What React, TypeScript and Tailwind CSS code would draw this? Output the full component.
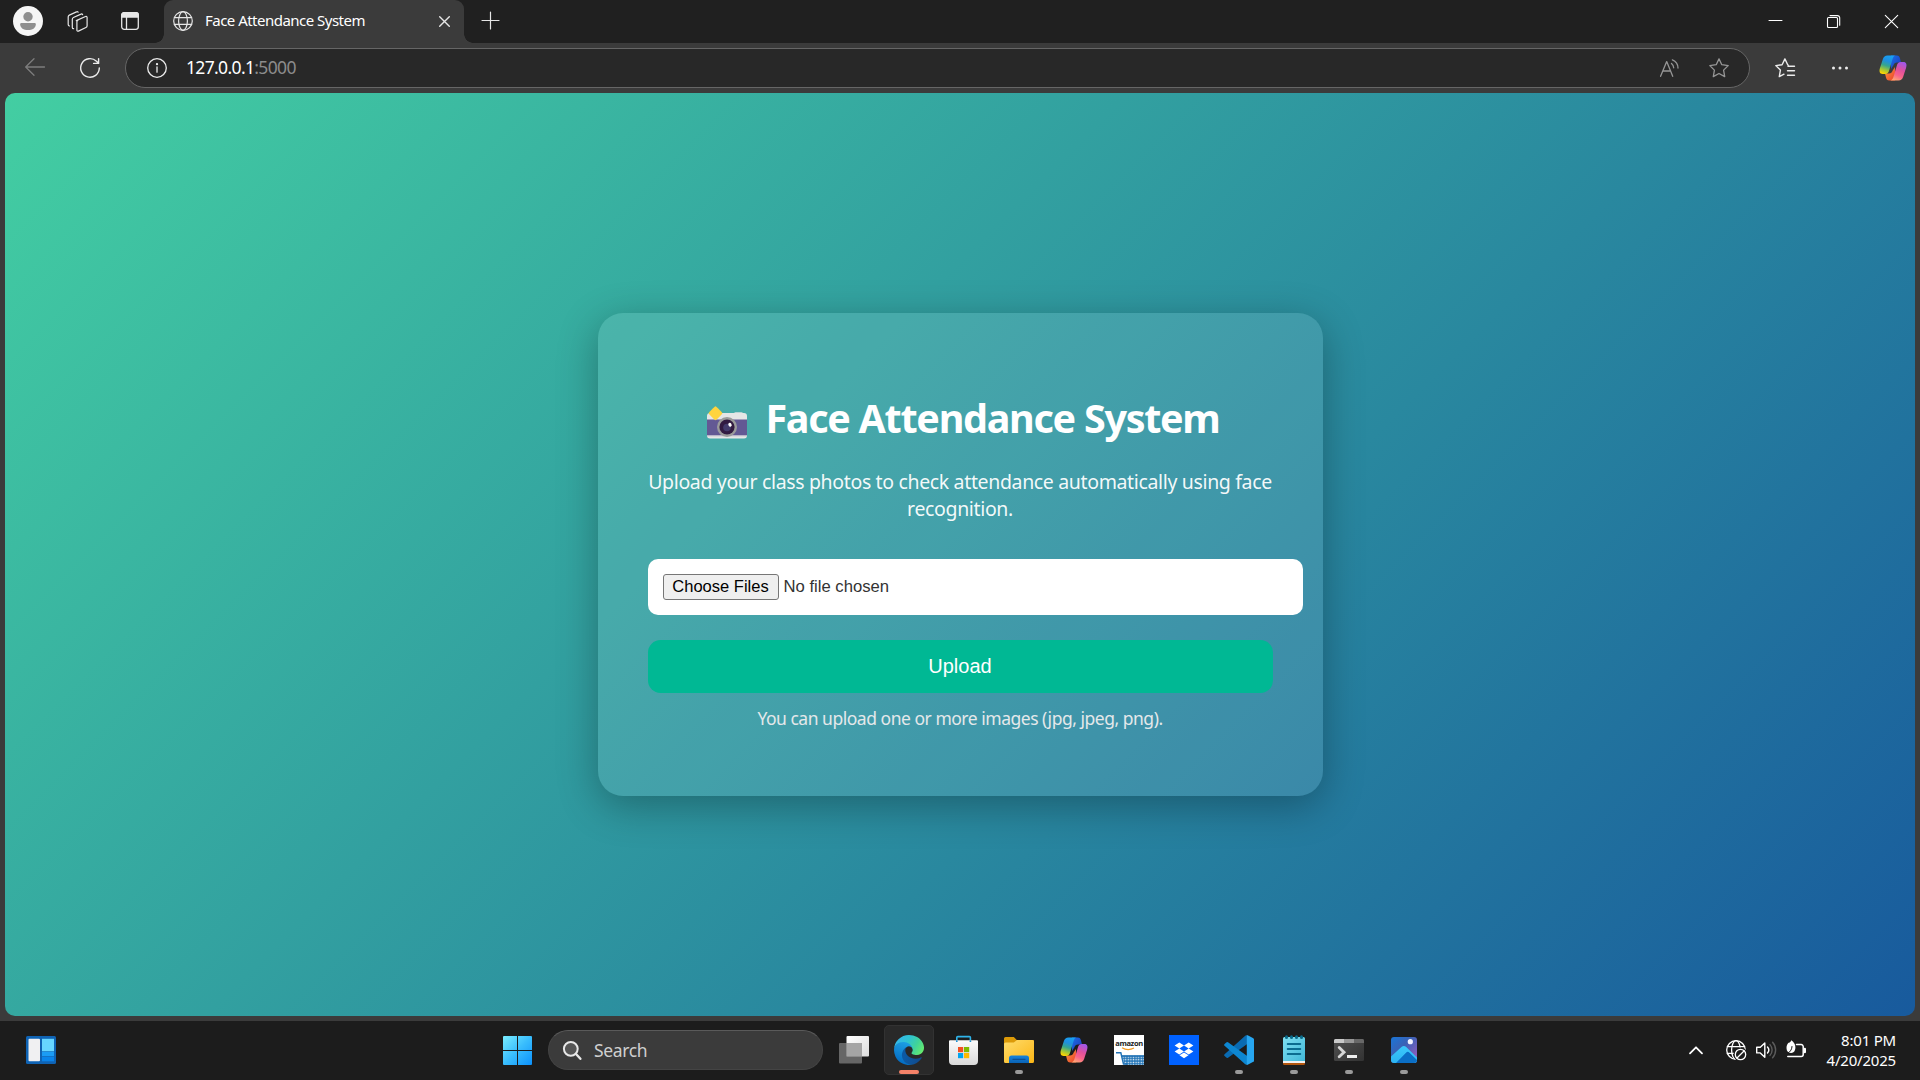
import React from "react";

type IconProps = { w?: number; h?: number; className?: string; sw?: number; children: React.ReactNode };

function Icon({ w = 20, h = 20, className = "", sw = 1.3, children }: IconProps) {
  return (
    <svg
      width={w}
      height={h}
      viewBox={`0 0 ${w} ${h}`}
      fill="none"
      stroke="currentColor"
      strokeWidth={sw}
      strokeLinecap="round"
      strokeLinejoin="round"
      className={`block shrink-0 overflow-visible ${className}`}
    >
      {children}
    </svg>
  );
}

function Globe() {
  return (
    <>
      <circle cx="10" cy="10" r="9.3" />
      <ellipse cx="10" cy="10" rx="4.4" ry="9.3" />
      <path d="M1.4 6.6h17.2M1.4 13.4h17.2" />
    </>
  );
}

function CopilotLogo({ id }: { id: string }) {
  return (
    <svg width="28" height="26" viewBox="0 0 28 26" className="block shrink-0">
      <defs>
        <linearGradient id={`${id}a`} x1="0.6" y1="0" x2="0.3" y2="1">
          <stop offset="0" stopColor="#18a0f2" />
          <stop offset="0.3" stopColor="#1f8fe0" />
          <stop offset="0.55" stopColor="#35a58f" />
          <stop offset="0.78" stopColor="#9cc53b" />
          <stop offset="1" stopColor="#ffd400" />
        </linearGradient>
        <linearGradient id={`${id}b`} x1="0.7" y1="0" x2="0.3" y2="1">
          <stop offset="0" stopColor="#a257e8" />
          <stop offset="0.4" stopColor="#e0509c" />
          <stop offset="0.7" stopColor="#f8628a" />
          <stop offset="1" stopColor="#ffa673" />
        </linearGradient>
        <linearGradient id={`${id}c`} x1="0" y1="0" x2="1" y2="1">
          <stop offset="0" stopColor="#1a6fe6" />
          <stop offset="1" stopColor="#1e35b8" />
        </linearGradient>
        <linearGradient id={`${id}d`} x1="0" y1="0" x2="1" y2="1">
          <stop offset="0" stopColor="#ff9a3c" />
          <stop offset="1" stopColor="#e8412c" />
        </linearGradient>
      </defs>
      <path d="M12 .5h5.8c2 0 2.7 1.300 3.200 3L22 7.600h-4c-2 0-3 1-3.700 3L12 14z" fill={`url(#${id}c)`} />
      <path d="M16 25.500h-5.800c-2 0-2.700-1.300-3.200-3L6 18.400h4c2 0 3-1 3.700-3L16 12z" fill={`url(#${id}d)`} />
      <path d="M8.500.5h8.300c-2 0-2.800 2-3.600 4.700l-3 10c-.8 2.600-1.700 3.800-4 3.800H3.600C.6 19 0 16.300.9 13.300L3.900 4C4.700 1.700 6 .5 8.500.5z" fill={`url(#${id}a)`} />
      <path d="M19.500 25.500h-8.300c2 0 2.800-2 3.600-4.700l3-10c.8-2.600 1.700-3.800 4-3.800h2.600c3 0 3.600 2.700 2.700 5.700l-3 9.300c-.8 2.300-2.100 3.500-4.600 3.500z" fill={`url(#${id}b)`} />
    </svg>
  );
}

function EdgeLogo() {
  return (
    <svg width="30" height="30" viewBox="0 0 256 256" className="block">
      <defs>
        <linearGradient id="e1" x1="0.2" y1="0.5" x2="1" y2="0.6">
          <stop offset="0" stopColor="#0c59a4" />
          <stop offset="1" stopColor="#114a8b" />
        </linearGradient>
        <linearGradient id="e2" x1="0.6" y1="0.1" x2="0.3" y2="1">
          <stop offset="0" stopColor="#1b9de2" />
          <stop offset="0.4" stopColor="#1388d4" />
          <stop offset="1" stopColor="#0067c0" />
        </linearGradient>
        <linearGradient id="e3" x1="0" y1="0.3" x2="1" y2="0.7">
          <stop offset="0" stopColor="#35b6ee" />
          <stop offset="0.4" stopColor="#2fc3d0" />
          <stop offset="0.7" stopColor="#40d39a" />
          <stop offset="1" stopColor="#66eb6e" />
        </linearGradient>
      </defs>
      <path fill="url(#e1)" d="M231 190.500c-3.400 1.800-6.900 3.400-10.500 4.700a101.800 101.800 0 0 1-35.900 6.500c-47.300 0-88.500-32.500-88.500-74.300a31.500 31.500 0 0 1 16.400-27.300c-42.800 1.800-53.800 46.400-53.800 72.500 0 74 68.100 81.400 82.800 81.400 7.900 0 19.800-2.300 27-4.600l1.300-.4a128.300 128.300 0 0 0 66.600-52.800 4 4 0 0 0-5.400-5.700z" />
      <path fill="url(#e2)" d="M105.700 241.400a79.200 79.200 0 0 1-22.700-21.300 80.700 80.700 0 0 1 29.500-120c3.200-1.500 8.500-4.100 15.600-4a32.400 32.400 0 0 1 25.700 13 31.900 31.900 0 0 1 6.300 18.700c0-.2 24.500-79.600-80-79.600-43.900 0-80 41.600-80 78.200a130.200 130.200 0 0 0 12.100 56 128 128 0 0 0 156.400 67 75.500 75.500 0 0 1-62.800-8z" />
      <path fill="url(#e3)" d="M152.300 148.900c-.8 1-3.300 2.500-3.300 5.700 0 2.600 1.700 5.200 4.800 7.300 14.400 10 41.500 8.600 41.600 8.600a59.600 59.600 0 0 0 30.300-8.300 61.400 61.400 0 0 0 30.400-52.900c.3-22.400-8-37.300-11.300-43.900C223.500 23.900 177.700 0 128 0A128 128 0 0 0 0 126.200c.5-36.500 36.800-66 80-66 3.500 0 23.500.3 42 10 16.300 8.600 24.900 18.900 30.800 29.200 6.200 10.700 7.300 24.100 7.300 29.500s-2.700 13.300-7.800 19.900z" />
    </svg>
  );
}

function StoreLogo() {
  return (
    <svg width="30" height="30" viewBox="0 0 30 30" className="block">
      <defs>
        <linearGradient id="st" x1="0" y1="0" x2="0" y2="1">
          <stop offset="0" stopColor="#fbfbfb" />
          <stop offset="1" stopColor="#d9d9d9" />
        </linearGradient>
      </defs>
      <path d="M7.800 7V2.600a1 1 0 0 1 1-1h11.600a1 1 0 0 1 1 1V7" fill="none" stroke="#2fb4ea" strokeWidth="1.600" />
      <path d="M0 6.300a1 1 0 0 1 1-1h27a1 1 0 0 1 1 1V26a4 4 0 0 1-4 4H4a4 4 0 0 1-4-4z" fill="url(#st)" />
      <path d="M7.800 5.300V7M21.400 5.300V7" stroke="#1c8fd0" strokeWidth="1.600" />
      <path fill="#f25022" d="M9 12h5.200v5.200H9z" />
      <path fill="#7fba00" d="M15 12h5.200v5.200H15z" />
      <path fill="#00a4ef" d="M9 18h5.200v5.200H9z" />
      <path fill="#ffb900" d="M15 18h5.200v5.200H15z" />
    </svg>
  );
}

function FolderLogo() {
  return (
    <svg width="30" height="30" viewBox="0 0 30 30" className="block">
      <defs>
        <linearGradient id="fo" x1="0" y1="0" x2="1" y2="1">
          <stop offset="0" stopColor="#ffdc6b" />
          <stop offset="1" stopColor="#fbb616" />
        </linearGradient>
        <linearGradient id="fb" x1="0" y1="0" x2="0" y2="1">
          <stop offset="0" stopColor="#1583dd" />
          <stop offset="1" stopColor="#0a63b5" />
        </linearGradient>
      </defs>
      <path d="M0 3.500A1.500 1.500 0 0 1 1.500 2h8.300l3 3H29a1 1 0 0 1 1 1v10H0z" fill="#dc9a08" />
      <path d="M0 9a1.500 1.500 0 0 1 1.500-1.500h8.300L13 5h15.500A1.500 1.500 0 0 1 30 6.500v20a1.500 1.500 0 0 1-1.500 1.500h-27A1.500 1.500 0 0 1 0 26.500z" fill="url(#fo)" />
      <path d="M5 28v-5a2.500 2.500 0 0 1 2.500-2.500h15A2.500 2.500 0 0 1 25 23v5z" fill="url(#fb)" />
      <path d="M9 24.300h12" stroke="#0b4f96" strokeWidth="1.300" strokeLinecap="round" />
    </svg>
  );
}

function AmazonTile() {
  return (
    <div className="relative h-[30px] w-[30px] overflow-hidden bg-white">
      <div className="flex w-full justify-center pt-[3px] font-['Open_Sans',sans-serif] text-[7.500px] leading-[11px] font-bold tracking-[-0.350px] text-[#222]">
        amazon
      </div>
      <svg width="30" height="30" viewBox="0 0 30 30" className="absolute inset-0">
        <defs>
          <pattern id="mesh" width="2.600" height="2.600" patternUnits="userSpaceOnUse">
            <rect width="2.600" height="2.600" fill="#2677b8" />
            <circle cx="1.300" cy="1.300" r="0.750" fill="#fff" />
          </pattern>
        </defs>
        <path d="M8 12.800c4 2.300 8 2.300 12 .2" stroke="#f39a22" strokeWidth="1.300" fill="none" />
        <path d="M8 20.500h22V30H10.800z" fill="url(#mesh)" />
        <path d="M2 17.700h4.800L9.500 29h4M7.600 21H30" stroke="#2172b5" strokeWidth="1.500" fill="none" />
      </svg>
    </div>
  );
}

function DropboxTile() {
  return (
    <svg width="30" height="30" viewBox="0 0 30 30" className="block">
      <path fill="#0061ff" d="M0 0h30v30H0z" />
      <path
        fill="#fff"
        d="M10.300 7.500l4.700 3-4.700 3-4.700-3zM19.700 7.500l4.700 3-4.700 3-4.700-3zM10.300 13.500l4.700 3-4.700 3-4.700-3zM19.700 13.500l4.700 3-4.700 3-4.700-3zM15 17.500l4.500 2.800L15 23.200l-4.500-2.900z"
      />
    </svg>
  );
}

function VSCodeLogo() {
  return (
    <svg width="30" height="30" viewBox="0 0 30 30" className="block">
      <path d="M21.500.4 30 4.600l-7.500 5L4 22.700a1.300 1.300 0 0 1-1.700-.1L.6 21a1.200 1.200 0 0 1 0-1.800z" fill="#0a6bb2" />
      <path d="M21.500 29.600 30 25.400l-7.500-5L4 7.300a1.300 1.300 0 0 0-1.700.1L.6 9a1.200 1.200 0 0 0 0 1.800z" fill="#0d86d1" />
      <path d="M21.700 29.800c.6.300 1.300.2 1.900-.1l5.300-2.600c.7-.3 1.100-1 1.100-1.700V4.600c0-.7-.4-1.400-1.100-1.700L23.600.3a2 2 0 0 0-2.100.2c.6-.4 1.300 0 1.300 1v27c0 1-.6 1.500-1.100 1.300z" fill="#27a6f0" />
    </svg>
  );
}

function NotepadLogo() {
  return (
    <svg width="22" height="30" viewBox="0 0 22 30" className="block">
      <defs>
        <linearGradient id="np" x1="0" y1="0" x2="1" y2="1">
          <stop offset="0" stopColor="#7fdff0" />
          <stop offset="1" stopColor="#41b8d8" />
        </linearGradient>
      </defs>
      <path d="M0 24h22v4.500a1.500 1.500 0 0 1-1.500 1.500h-19A1.500 1.500 0 0 1 0 28.500z" fill="#b3560d" />
      <path d="M0 22h22v6H0z" fill="#f1f1f1" />
      <path d="M0 3.500A1.500 1.500 0 0 1 1.500 2h19A1.500 1.500 0 0 1 22 3.500V26H0z" fill="url(#np)" />
      <path d="M4.700 9h12.600M4.700 14h12.600M4.700 19h12.600" stroke="#0b6c8f" strokeWidth="1.900" strokeLinecap="round" />
      <path d="M3.500 1.800v.7M8.500 1.800v.7M13.500 1.800v.7M18.500 1.800v.7" stroke="#0b6a89" strokeWidth="3" strokeLinecap="round" />
    </svg>
  );
}

function TerminalLogo() {
  return (
    <svg width="30" height="30" viewBox="0 0 30 30" className="block">
      <defs>
        <linearGradient id="tm" x1="0" y1="0" x2="1" y2="1">
          <stop offset="0" stopColor="#505050" />
          <stop offset="1" stopColor="#323232" />
        </linearGradient>
      </defs>
      <rect y="4" width="30" height="22" rx="1.500" fill="url(#tm)" />
      <path d="M0 8V5.500A1.500 1.500 0 0 1 1.500 4H10v4z" fill="#c9c9c9" />
      <path d="M10 4h10v4H10z" fill="#979797" />
      <path d="M20 4h8.500A1.500 1.500 0 0 1 30 5.500V8H20z" fill="#686868" />
      <path d="M5.200 12.500l4.800 4.700-4.800 4.600" stroke="#d5d5d5" strokeWidth="2.900" fill="none" strokeLinecap="round" />
      <path d="M13 20h10v3H13z" fill="#eee" />
    </svg>
  );
}

function PhotosLogo() {
  return (
    <svg width="26" height="26" viewBox="0 0 26 26" className="block">
      <defs>
        <linearGradient id="ph1" x1="0" y1="0" x2="1" y2="1">
          <stop offset="0" stopColor="#1976d8" />
          <stop offset="0.400" stopColor="#3a62b5" />
          <stop offset="1" stopColor="#a65bc0" />
        </linearGradient>
        <linearGradient id="ph2" x1="0.500" y1="0" x2="0.300" y2="1">
          <stop offset="0" stopColor="#3bc9fb" />
          <stop offset="1" stopColor="#2cb4f3" />
        </linearGradient>
        <clipPath id="phc">
          <rect width="26" height="26" rx="3" />
        </clipPath>
      </defs>
      <g clipPath="url(#phc)">
        <path d="M0 0h26v26H0z" fill="url(#ph1)" />
        <path d="M0 19.500 10.500 10a3.500 3.500 0 0 1 4.700 0L26 20.500V26H0z" fill="url(#ph2)" />
        <path d="M5 26l10-10.300a2.500 2.500 0 0 1 3.500 0L26 23v3z" fill="#0b6fc6" />
        <circle cx="19.300" cy="4.700" r="2.600" fill="#f2f3ff" />
      </g>
    </svg>
  );
}

function WindowsLogo() {
  return (
    <svg width="29" height="29" viewBox="0.5 0.5 29 29" className="mt-[1px] block">
      <defs>
        <linearGradient id="wn" gradientUnits="userSpaceOnUse" x1="0" y1="0" x2="30" y2="30">
          <stop offset="0" stopColor="#7cefff" />
          <stop offset="0.500" stopColor="#39bdfd" />
          <stop offset="1" stopColor="#0a8ffc" />
        </linearGradient>
      </defs>
      <path d="M.5 1.500a1 1 0 0 1 1-1h13v14H.5zM15.500.5h13a1 1 0 0 1 1 1v13h-14zM.5 15.500h14v14h-13a1 1 0 0 1-1-1zM15.500 15.500h14v13a1 1 0 0 1-1 1h-13z" fill="url(#wn)" />
    </svg>
  );
}

function TaskViewLogo() {
  return (
    <svg width="30" height="30" viewBox="0 0 30 30" className="block">
      <defs>
        <linearGradient id="tv" x1="0" y1="0" x2="1" y2="1">
          <stop offset="0" stopColor="#fff" />
          <stop offset="1" stopColor="#ddd" />
        </linearGradient>
      </defs>
      <rect x="7.500" y="1" width="22.500" height="20.500" rx="1" fill="url(#tv)" />
      <rect y="8" width="23" height="20.500" rx="1" fill="#737373" fillOpacity="0.850" />
      <path d="M7.500 8H23v13.500H7.500z" fill="#a5a5a5" />
    </svg>
  );
}

function CameraEmoji() {
  return (
    <svg width="40" height="33" viewBox="0 0 40 33" className="block shrink-0">
      <path d="M27 7.500a1.500 1.500 0 0 1 1.500-1.500h6A1.500 1.500 0 0 1 36 7.500V9h-9z" fill="#b9d4d4" />
      <rect y="7" width="40" height="25.500" rx="3" fill="#e6e6e6" />
      <path d="M0 13.500h40v16H0z" fill="#635994" />
      <path d="M0 29h40v1.300H0z" fill="#b8b4c8" />
      <circle cx="20" cy="21" r="10" fill="#9b9b9b" />
      <circle cx="20" cy="21" r="7.600" fill="#321b41" />
      <circle cx="20" cy="21.500" r="3.800" fill="#433b6b" />
      <ellipse cx="23" cy="18.800" rx="1.600" ry="2" fill="#fff" transform="rotate(-30 23 18.800)" />
      <path d="M8.500.3c.6 0 6.900 6.200 6.900 6.900s-6.300 7-6.900 7-6.900-6.300-6.900-7S7.900.3 8.500.3z" fill="#ffd43d" />
    </svg>
  );
}

function TitleBar() {
  return (
    <div className="flex h-[43px] items-start bg-[#202020] text-[#e6e6e6]">
      <div className="flex h-[43px] w-[164px] shrink-0 items-center pl-[13px]">
        <svg width="30" height="30" viewBox="0 0 30 30" className="mt-[-1px] block shrink-0">
          <circle cx="15" cy="15" r="15" fill="#f6f6f6" />
          <circle cx="15" cy="10.700" r="4.700" fill="#8f8f8f" />
          <path d="M8.500 17h13c.8 0 1.300.5 1.300 1.200 0 4-3.500 5.800-7.800 5.800s-7.800-1.800-7.800-5.800c0-.7.5-1.200 1.300-1.200z" fill="#8f8f8f" />
        </svg>
        <Icon w={21} h={21} sw={1.2} className="ml-[24px]">
          <path d="M9.300 9.600 18.500 5.500a1 1 0 0 1 1.600.9v8.300a2 2 0 0 1-1.200 1.800l-7.500 3.600a1 1 0 0 1-1.500-.9v-8.300a2 2 0 0 1 1-1.600" />
          <path d="M6.600 17.700a1.300 1.300 0 0 1-1.300-1.300V8.200a2 2 0 0 1 1.100-1.700L14 3.100a1.200 1.200 0 0 1 1.600.5" />
          <path d="M2.500 15a1.400 1.400 0 0 1-1.300-1.400V5.800a2 2 0 0 1 1.100-1.700l7.200-3.200a1.200 1.200 0 0 1 1.600.3" />
        </Icon>
        <Icon w={18} h={18} sw={1.3} className="mt-[-1px] ml-[33px]">
          <rect x=".7" y=".7" width="16.600" height="16.600" rx="2.500" />
          <path d="M.7 5V3A2.300 2.300 0 0 1 3 .7h12A2.300 2.300 0 0 1 17.300 3v2z" fill="currentColor" />
          <path d="M5.500 5v12" />
        </Icon>
      </div>
      <div className="relative flex h-[43px] w-[300px] shrink-0 items-center rounded-t-[9px] bg-[#3b3b3b] pb-[1px] pl-[9px]">
        <div className="absolute bottom-0 left-[-9px] h-[9px] w-[9px] bg-[radial-gradient(circle_at_0_0,#202020_8.500px,#3b3b3b_9px)]" />
        <div className="absolute right-[-9px] bottom-0 h-[9px] w-[9px] bg-[radial-gradient(circle_at_100%_0,#202020_8.500px,#3b3b3b_9px)]" />
        <Icon w={20} h={20} sw={1.2}>
          <Globe />
        </Icon>
        <span className="mt-[-1px] ml-[12px] w-[234px] text-[15px] tracking-[-0.520px] whitespace-nowrap text-white">Face Attendance System</span>
        <Icon w={11} h={11} sw={1.4} className="mt-[1px]">
          <path d="M.7.700l9.600 9.600M10.300.7.700 10.300" />
        </Icon>
      </div>
      <Icon w={17} h={17} sw={1.2} className="mt-[12px] ml-[18px]">
        <path d="M8.500 0v17M0 8.500h17" />
      </Icon>
      <div className="ml-auto flex h-[43px] items-center gap-[45px] pr-[22px] text-white">
        <Icon w={13} h={13} sw={1}>
          <path d="M0 5.500h13" />
        </Icon>
        <Icon w={13} h={13} sw={1.1}>
          <rect x=".5" y="2.500" width="10" height="10" rx="1" />
          <path d="M3 .6h7.500a2.200 2.200 0 0 1 2.200 2.200v7.500" />
        </Icon>
        <Icon w={13} h={13} sw={1.1}>
          <path d="M.3.300l12.400 12.400M12.700.3.300 12.700" />
        </Icon>
      </div>
    </div>
  );
}

function Toolbar() {
  return (
    <div className="flex h-[50px] items-center bg-[#3b3b3b] pl-[25px] text-[#ececec]">
      <Icon w={20} h={18} sw={1.3} className="mt-[-2px] text-[#7d7d7d]">
        <path d="M19.500 9H.8M9 .7.700 9 9 17.300" />
      </Icon>
      <Icon w={20} h={20} sw={1.4} className="ml-[35px]">
        <path d="M19.300 10A9.300 9.300 0 1 1 16.500 3.300L18.300 5M18.600.6v4.800h-5" />
      </Icon>
      <div className="ml-[25px] flex h-[40px] w-[1625px] items-center rounded-full border border-[#666] bg-[#282828] pr-[20px] pl-[21px]">
        <Icon w={20} h={20} sw={1.3}>
          <circle cx="10" cy="10" r="9.300" />
          <path d="M10 9v5.200" />
          <circle cx="10" cy="6.200" r=".5" fill="currentColor" />
        </Icon>
        <div className="mt-[-2px] ml-[19px] text-[17.500px] leading-[24px] tracking-[-0.650px] whitespace-nowrap text-white">
          127.0.0.1<span className="text-[#8c8c8c]">:5000</span>
        </div>
        <Icon w={19} h={18} sw={1.3} className="mt-[-1px] ml-auto text-[#969696]">
          <path d="M.6 17.300 6.700 2.600l6 14.700M2.800 12h7.700M11.500 4.500a6 6 0 0 1 2.200 4.300M12.400.8a9 9 0 0 1 5.600 8.300" />
        </Icon>
        <Icon w={20} h={20} sw={1.3} className="ml-[30px] text-[#969696]">
          <path d="M10 .9l2.800 5.800 6.400.9-4.600 4.500 1.100 6.500L10 15.500l-5.700 3.100 1.100-6.500L.8 7.600l6.400-.9z" />
        </Icon>
      </div>
      <Icon w={20} h={20} sw={1.4} className="ml-[25px]">
        <path d="M13.200 7.400 12.700 6.700 9.900.9 7.100 6.700l-6.300.9 4.600 4.500-1.100 6.500L9 16.200M13 8.300h6.500M12.500 12.700h7M12.500 17.200h7" />
      </Icon>
      <svg width="18" height="4" viewBox="0 0 18 4" className="ml-[36px] block" fill="currentColor">
        <circle cx="2.500" cy="2" r="1.500" />
        <circle cx="9" cy="2" r="1.500" />
        <circle cx="15.500" cy="2" r="1.500" />
      </svg>
      <div className="ml-[30px]">
        <CopilotLogo id="cpt" />
      </div>
    </div>
  );
}

function UploadCard() {
  return (
    <div className="mt-[220px] flex h-[483px] w-[725px] flex-col rounded-[25px] bg-white/10 px-[50px] shadow-[0_10px_40px_rgba(0,0,0,0.3)]">
      <div className="mt-[78px] flex h-[54px] items-center justify-center gap-[18px] pl-[7px] text-white">
        <div className="mt-[8px]">
          <CameraEmoji />
        </div>
        <h1 className="text-[39.500px] leading-[54px] font-bold tracking-[-1.280px] whitespace-nowrap">Face Attendance System</h1>
      </div>
      <p className="mt-[23px] text-center text-[19.500px] leading-[27px] tracking-[-0.350px] whitespace-nowrap text-white/95">
        Upload your class photos to check attendance automatically using face
        <br />
        recognition.
      </p>
      <div className="mt-[37px] flex h-[56px] w-[655px] shrink-0 items-center rounded-[10px] bg-white pl-[15px] font-['Liberation_Sans',Arial,sans-serif] text-[16.670px]">
        <button className="h-[26px] w-[116px] rounded-[3px] border border-[#767676] bg-[#efefef] pb-[2px] text-[16.500px] leading-[22px] whitespace-nowrap text-black">Choose Files</button>
        <span className="mt-[-2px] ml-[5px] text-[#333]">No file chosen</span>
      </div>
      <button className="mt-[25px] h-[53px] shrink-0 rounded-[12.500px] bg-[#00b894] pb-[2px] font-['Liberation_Sans',Arial,sans-serif] text-[20px] text-white">
        Upload
      </button>
      <p className="mt-[13px] text-center text-[17.500px] leading-[25px] tracking-[-0.480px] whitespace-nowrap text-[#e4e8ea]">
        You can upload one or more images (jpg, jpeg, png).
      </p>
    </div>
  );
}

function TaskCell({ running, active, children }: { running?: boolean; active?: boolean; children: React.ReactNode }) {
  return (
    <div className="relative flex h-[59px] w-[55px] shrink-0 items-center justify-center pb-[1px]">
      {active && <div className="absolute top-[4px] left-[2.500px] h-[50px] w-[50px] rounded-[5px] border border-[#323232] bg-[#292929]" />}
      <div className="relative">{children}</div>
      {active && <div className="absolute bottom-[6px] h-[4px] w-[20px] rounded-full bg-[#f58268]" />}
      {running && <div className="absolute bottom-[6px] h-[4px] w-[8px] rounded-full bg-[#9a9a9a]" />}
    </div>
  );
}

function Taskbar() {
  return (
    <div className="flex h-[59px] items-center bg-[#1c1c1c] text-white">
      <svg width="30" height="28" viewBox="0 0 30 28" className="mt-[-1px] ml-[26px] block shrink-0">
        <rect width="30" height="28" rx="1.500" fill="#0f63b4" />
        <rect x="2.500" y="2.800" width="11.500" height="22.500" rx="1" fill="#f0f0f2" />
        <path d="M16 2.800h12v12.500H16z" fill="#67d6ff" />
        <path d="M16 15.800h12v4.500H16z" fill="#1b9cf5" />
        <path d="M16 21h12v4.300H16z" fill="#0a84ea" />
      </svg>
      <div className="ml-[434px] flex items-center">
        <TaskCell>
          <WindowsLogo />
        </TaskCell>
        <div className="mt-[-1px] ml-[3px] flex h-[40px] w-[275px] items-center rounded-full border border-t-[#5a5a5a] border-r-[#444] border-b-[#444] border-l-[#444] bg-[#3b3b3b] pl-[14px]">
          <Icon w={18} h={19} sw={2} className="text-[#e8e8e8]">
            <circle cx="7.800" cy="7.800" r="6.900" fill="#555" />
            <path d="M13 13l4.400 4.800" strokeWidth="2.400" />
          </Icon>
          <span className="mt-[-1px] ml-[13px] text-[17.500px] leading-[24px] tracking-[-0.350px] text-[#cfcfcf]">Search</span>
        </div>
        <div className="ml-[3.500px] flex">
          <TaskCell>
            <TaskViewLogo />
          </TaskCell>
          <TaskCell active>
            <EdgeLogo />
          </TaskCell>
          <TaskCell>
            <StoreLogo />
          </TaskCell>
          <TaskCell running>
            <FolderLogo />
          </TaskCell>
          <TaskCell>
            <CopilotLogo id="cpb" />
          </TaskCell>
          <TaskCell>
            <AmazonTile />
          </TaskCell>
          <TaskCell>
            <DropboxTile />
          </TaskCell>
          <TaskCell running>
            <VSCodeLogo />
          </TaskCell>
          <TaskCell running>
            <NotepadLogo />
          </TaskCell>
          <TaskCell running>
            <TerminalLogo />
          </TaskCell>
          <TaskCell running>
            <PhotosLogo />
          </TaskCell>
        </div>
      </div>
      <div className="ml-auto flex items-center pr-[24px] pb-[1px]">
        <Icon w={14} h={8} sw={1.8}>
          <path d="M1 7.300l6-6 6 6" />
        </Icon>
        <Icon w={20} h={20} sw={1.3} className="ml-[23px]">
          <Globe />
          <circle cx="14.500" cy="14.500" r="7" fill="#1c1c1c" stroke="none" />
          <circle cx="14.500" cy="14.500" r="5.200" />
          <path d="M18 11l-7 7" />
        </Icon>
        <Icon w={20} h={18} sw={1.4} className="ml-[10px]">
          <path d="M.7 6.300h3.600L8.800 2v14.200l-4.500-4.300H.7z" />
          <path d="M11.500 6a4.500 4.500 0 0 1 0 6" />
          <path d="M14 3.600a8 8 0 0 1 0 10.800M16.600 1.200a11.600 11.600 0 0 1 0 15.600" stroke="#5c5c5c" />
        </Icon>
        <Icon w={20} h={18} sw={1.5} className="mt-[-2px] ml-[10px]">
          <path d="M10.500 4.600h4.700a2 2 0 0 1 2 2v7.800a2 2 0 0 1-2 2H1.800" />
          <path d="M18.800 9v3" strokeWidth="2.400" />
          <path d="M5.300.3c2.700 2 4.100 4 4.100 7 0 3.500-1.500 5.700-4.200 5.700-2.800 0-4.700-1.800-4.700-5 0-2.500.8-4 2-5.300C3.600 3 4.700 2 5.300.3z" fill="currentColor" stroke="none" />
          <path d="M6 6.500c0 2.500-1.300 5-4.200 6.800" stroke="#1c1c1c" strokeWidth="1" />
        </Icon>
        <div className="mt-[-1px] ml-[19px] w-[71px] text-right text-[15px] leading-[20px] tracking-[-0.200px] whitespace-nowrap">
          8:01 PM
          <br />
          4/20/2025
        </div>
      </div>
    </div>
  );
}

export default function App() {
  return (
    <div className="flex h-[1080px] w-[1920px] flex-col overflow-hidden bg-[#3b3b3b] font-['Noto_Sans','Segoe_UI',sans-serif]">
      <TitleBar />
      <Toolbar />
      <main className="mx-[5px] mb-[5px] flex h-[923px] shrink-0 justify-center overflow-hidden rounded-[10px] bg-[linear-gradient(135deg,#43cea2,#185a9d)]">
        <UploadCard />
      </main>
      <Taskbar />
    </div>
  );
}
